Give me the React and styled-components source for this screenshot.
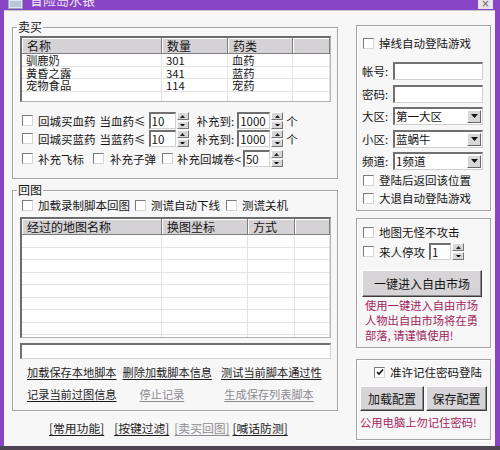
import React from 'react'
import styled, { createGlobalStyle } from 'styled-components'

const GlobalStyle = createGlobalStyle`
  html, body { margin: 0; padding: 0; background: #fff; }
  body {
    font-family: "Noto Sans CJK SC", "Noto Sans", sans-serif;
    font-size: 11.5px;
    color: #141414;
  }
  * { box-sizing: border-box; }
`

const Window = styled.div`
  width: 500px;
  height: 450px;
  background: #8744c4;
  padding: 0 5px 0 4px;
  border-bottom: 4px solid #4c4654;
  display: flex;
  flex-direction: column;
`
const TitleBar = styled.div`
  height: 10px;
  flex: none;
  display: flex;
  align-items: flex-start;
  overflow: hidden;
  padding-left: 4px;
`
const TitleIcon = styled.svg`
  flex: none;
  margin-top: -3px;
`
const TitleText = styled.span`
  margin: -8px 0 0 7px;
  color: #f1e8f8;
  font-size: 13px;
  line-height: 16px;
`
const CloseBtn = styled.div`
  margin-left: auto;
  margin-right: 2px;
  width: 15px;
  height: 9px;
  background: #e6e4e8;
  color: #666;
  font-size: 10px;
  line-height: 7px;
  text-align: center;
  font-family: "DejaVu Sans", sans-serif;
`
const Client = styled.div`
  flex: 1;
  background: #f8f7f8;
  border-top: 1px solid #c9c6cc;
  display: flex;
  gap: 18px;
  padding: 0 5px 0 8px;
`
const Column = styled.div`
  width: ${p => p.$w}px;
  flex: none;
  display: flex;
  flex-direction: column;
  padding-top: ${p => p.$pt}px;
`
const Group = styled.fieldset`
  margin: ${p => p.$mt || 0}px 0 0 0;
  height: ${p => p.$h}px;
  min-width: 0;
  padding: ${p => p.$pad || '0 6px 0 7px'};
  border: 1px solid #a4a2a7;
  box-shadow: 1px 1px 0 #fff, inset 1px 1px 0 #fff;
  display: flex;
  flex-direction: column;
`
const Legend = styled.legend`
  font-size: 12px;
  line-height: 14px;
  padding: 0 1px;
  margin-left: -3px;
`
const ListView = styled.div`
  margin-top: ${p => p.$mt}px;
  height: ${p => p.$h}px;
  flex: none;
  overflow: hidden;
  background: #fff;
  border-style: solid;
  border-width: 2px 1px 1px 2px;
  border-color: #6c6c6c #b4b4b4 #b4b4b4 #6c6c6c;
  display: grid;
  grid-template-columns: ${p => p.$cols};
  grid-template-rows: 16px;
  grid-auto-rows: 12.5px;
`
const HeadCell = styled.div`
  background: #d5d2d5;
  border-right: 1px solid #7e7e7e;
  border-bottom: 1px solid #7e7e7e;
  box-shadow: inset 1px 1px 0 #fff;
  padding-left: 5px;
  font-size: 12px;
  line-height: 15px;
  white-space: nowrap;
  overflow: hidden;
`
const Cell = styled.div`
  border-right: 1px solid #e3e3e3;
  border-bottom: 1px solid #e3e3e3;
  padding-left: 4px;
  font-size: 11.3px;
  line-height: 12px;
  white-space: nowrap;
`
const Row = styled.div`
  display: flex;
  align-items: center;
  height: ${p => p.$h || 17}px;
  margin-top: ${p => p.$mt || 0}px;
  flex: none;
  white-space: nowrap;
`
const Label = styled.span`
  margin-left: ${p => p.$ml || 0}px;
  width: ${p => (p.$w ? `${p.$w}px` : 'auto')};
  flex: none;
  line-height: 14px;
`
const CheckBox = styled.span`
  width: 11px;
  height: 11px;
  flex: none;
  margin-left: ${p => p.$ml || 0}px;
  background: #fff;
  border-style: solid;
  border-width: 1px;
  border-color: #7a7a7a #d6d6d6 #d6d6d6 #7a7a7a;
  display: flex;
  align-items: center;
  justify-content: center;
`
const SpinWrap = styled.div`
  display: flex;
  gap: 1px;
  margin-left: ${p => p.$ml || 0}px;
  flex: none;
  height: 17px;
`
const SunkenBox = styled.div`
  width: ${p => (p.$w ? `${p.$w}px` : 'auto')};
  flex: ${p => (p.$w ? 'none' : '1')};
  height: 100%;
  background: #fff;
  border-style: solid;
  border-width: 2px 1px 1px 2px;
  border-color: #707070 #d0d0d0 #d0d0d0 #707070;
  padding-left: 1px;
  font-size: 11.5px;
  line-height: 13px;
  display: flex;
  align-items: center;
  overflow: hidden;
`
const SpinButtons = styled.div`
  width: 12px;
  display: flex;
  flex-direction: column;
  gap: 1px;
`
const SpinHalf = styled.div`
  flex: 1;
  background: #d8d6d8;
  border: 1px solid;
  border-color: #fff #777 #777 #fff;
  display: flex;
  align-items: center;
  justify-content: center;
`
const DropButton = styled.div`
  width: 14px;
  margin: 1px 1px 1px auto;
  align-self: stretch;
  background: #d8d6d8;
  border: 1px solid;
  border-color: #fff #666 #666 #fff;
  display: flex;
  align-items: center;
  justify-content: center;
`
const Button = styled.div`
  width: ${p => p.$w}px;
  height: ${p => p.$h}px;
  margin-left: ${p => p.$ml || 0}px;
  margin-top: ${p => p.$mt || 0}px;
  flex: none;
  background: #d6d4d6;
  border: 1px solid;
  border-color: #fff #3c3c3c #3c3c3c #fff;
  box-shadow: inset -1px -1px 0 #8a8a8a;
  display: flex;
  align-items: center;
  justify-content: center;
  font-size: 12px;
`
const Note = styled.div`
  margin: ${p => p.$mt || 0}px 0 0 ${p => p.$ml || 0}px;
  color: #a2245a;
  font-size: 11.3px;
  line-height: 15px;
`
const FieldRow = styled.div`
  display: flex;
  align-items: center;
  height: 18px;
  margin-top: ${p => p.$mt}px;
  flex: none;
`
const LinkText = styled.span`
  margin-left: ${p => p.$ml || 0}px;
  color: ${p => (p.$dim ? '#8c8a90' : '#1c1c1c')};
  text-decoration: underline;
  text-underline-offset: 2px;
  font-size: ${p => p.$size || 11.2}px;
  line-height: 14px;
  white-space: nowrap;
`
const ButtonRow = styled.div`
  display: flex;
  gap: 2px;
  margin-top: ${p => p.$mt}px;
`

const UpArrow = () => (
  <svg width="5" height="3" viewBox="0 0 5 3"><path d="M2.5 0 L5 3 L0 3 Z" fill="#222" /></svg>
)
const DownArrow = ({ size = 5 }) => (
  <svg width={size} height={size / 1.7} viewBox="0 0 5 3"><path d="M0 0 L5 0 L2.5 3 Z" fill="#111" /></svg>
)

function Check({ ml, checked }) {
  return (
    <CheckBox $ml={ml}>
      {checked && (
        <svg width="8" height="8" viewBox="0 0 8 8">
          <path d="M1 4 L3 6 L7 1.5" stroke="#111" strokeWidth="1.6" fill="none" />
        </svg>
      )}
    </CheckBox>
  )
}

function Spin({ value, w, ml }) {
  return (
    <SpinWrap $ml={ml}>
      <SunkenBox $w={w}>{value}</SunkenBox>
      <SpinButtons>
        <SpinHalf><UpArrow /></SpinHalf>
        <SpinHalf><DownArrow /></SpinHalf>
      </SpinButtons>
    </SpinWrap>
  )
}

function Select({ value }) {
  return (
    <SunkenBox>
      <span>{value}</span>
      <DropButton><DownArrow size={7} /></DropButton>
    </SunkenBox>
  )
}

const buyItems = [
  ['驯鹿奶', '301', '血药'],
  ['黄昏之露', '341', '蓝药'],
  ['宠物食品', '114', '宠药'],
  ['', '', ''],
]

export default function App() {
  return (
    <>
      <GlobalStyle />
      <Window>
        <TitleBar>
          <TitleIcon width="15" height="12" viewBox="0 0 15 12">
            <rect x="0.5" y="0.5" width="14" height="11" fill="#dfe6f0" stroke="#9aa6b8" />
            <rect x="2" y="4" width="11" height="6" fill="#b8c6da" />
          </TitleIcon>
          <TitleText>冒险岛水银</TitleText>
          <CloseBtn>×</CloseBtn>
        </TitleBar>
        <Client>
          <Column $w={326} $pt={9}>
            <Group $h={159}>
              <Legend>卖买</Legend>
              <ListView $mt={2} $h={66} $cols="140px 66px 65px 1fr">
                <HeadCell>名称</HeadCell>
                <HeadCell>数量</HeadCell>
                <HeadCell>药类</HeadCell>
                <HeadCell />
                {buyItems.map((it, i) => (
                  <React.Fragment key={i}>
                    <Cell>{it[0]}</Cell>
                    <Cell>{it[1]}</Cell>
                    <Cell>{it[2]}</Cell>
                    <Cell />
                  </React.Fragment>
                ))}
              </ListView>
              <Row $mt={10}>
                <Check ml={2} />
                <Label $ml={5}>回城买血药</Label>
                <Label $ml={4}>当血药≤</Label>
                <Spin value="10" w={27} ml={3} />
                <Label $ml={8}>补充到:</Label>
                <Spin value="1000" w={33} ml={3} />
                <Label $ml={3}>个</Label>
              </Row>
              <Row $mt={1}>
                <Check ml={2} />
                <Label $ml={5}>回城买蓝药</Label>
                <Label $ml={4}>当蓝药≤</Label>
                <Spin value="10" w={27} ml={3} />
                <Label $ml={8}>补充到:</Label>
                <Spin value="1000" w={33} ml={3} />
                <Label $ml={3}>个</Label>
              </Row>
              <Row $mt={3}>
                <Check ml={2} />
                <Label $ml={5}>补充飞标</Label>
                <Check ml={9} />
                <Label $ml={6}>补充子弹</Label>
                <Check ml={6} />
                <Label $ml={4}>补充回城卷&lt;</Label>
                <Spin value="50" w={27} ml={2} />
              </Row>
            </Group>

            <Group $h={228} $mt={4}>
              <Legend>回图</Legend>
              <Row $h={14} $mt={1}>
                <Check ml={2} />
                <Label $ml={5}>加载录制脚本回图</Label>
                <Check ml={5} />
                <Label $ml={5}>测谎自动下线</Label>
                <Check ml={6} />
                <Label $ml={5}>测谎关机</Label>
              </Row>
              <ListView $mt={5} $h={121} $cols="140px 86px 47px 1fr">
                <HeadCell>经过的地图名称</HeadCell>
                <HeadCell>换图坐标</HeadCell>
                <HeadCell>方式</HeadCell>
                <HeadCell />
                {Array.from({ length: 9 * 4 }).map((_, i) => <Cell key={i} />)}
              </ListView>
              <Row $h={16} $mt={5}>
                <SunkenBox />
              </Row>
              <Row $h={14} $mt={6}>
                <LinkText $ml={7}>加载保存本地脚本</LinkText>
                <LinkText $ml={6}>删除加载脚本信息</LinkText>
                <LinkText $ml={9}>测试当前脚本通过性</LinkText>
              </Row>
              <Row $h={14} $mt={8}>
                <LinkText $ml={7}>记录当前过图信息</LinkText>
                <LinkText $ml={23} $dim>停止记录</LinkText>
                <LinkText $ml={40} $dim>生成保存列表脚本</LinkText>
              </Row>
            </Group>

            <Row $h={14} $mt={10}>
              <LinkText $ml={37} $size={11.8}>[常用功能]</LinkText>
              <LinkText $ml={10} $size={11.8}>[按键过滤]</LinkText>
              <LinkText $ml={5} $size={11.8} $dim>[卖买回图]</LinkText>
              <LinkText $ml={3} $size={11.8}>[喊话防测]</LinkText>
            </Row>
          </Column>

          <Column $w={135} $pt={14}>
            <Group $h={186} $pad="10px 7px 0 5px">
              <Row $h={14}>
                <Check ml={1} />
                <Label $ml={5}>掉线自动登陆游戏</Label>
              </Row>
              <FieldRow $mt={12}>
                <Label $w={31}>帐号:</Label>
                <SunkenBox />
              </FieldRow>
              <FieldRow $mt={4.5}>
                <Label $w={31}>密码:</Label>
                <SunkenBox />
              </FieldRow>
              <FieldRow $mt={4.5}>
                <Label $w={31}>大区:</Label>
                <Select value="第一大区" />
              </FieldRow>
              <FieldRow $mt={4.5}>
                <Label $w={31}>小区:</Label>
                <Select value="蓝蜗牛" />
              </FieldRow>
              <FieldRow $mt={4.5}>
                <Label $w={31}>频道:</Label>
                <Select value="1频道" />
              </FieldRow>
              <Row $h={14} $mt={3}>
                <Check ml={1} />
                <Label $ml={5}>登陆后返回该位置</Label>
              </Row>
              <Row $h={14} $mt={4}>
                <Check ml={1} />
                <Label $ml={5}>大退自动登陆游戏</Label>
              </Row>
            </Group>

            <Group $h={130} $mt={7} $pad="6px 7px 0 5px">
              <Row $h={14}>
                <Check ml={1} />
                <Label $ml={5}>地图无怪不攻击</Label>
              </Row>
              <Row $mt={4}>
                <Check ml={1} />
                <Label $ml={5}>来人停攻</Label>
                <Spin value="1" w={22} ml={4} />
              </Row>
              <Button $w={120} $h={27} $mt={10}>一键进入自由市场</Button>
              <Note $mt={1} $ml={3}>
                使用一键进入自由市场<br />
                人物出自由市场将在勇<br />
                部落, 请谨慎使用!
              </Note>
            </Group>

            <Group $h={81} $mt={11} $pad="5px 2px 0 3px">
              <Row $h={14}>
                <Check ml={14} checked />
                <Label $ml={5}>准许记住密码登陆</Label>
              </Row>
              <ButtonRow $mt={7}>
                <Button $w={64} $h={25}>加载配置</Button>
                <Button $w={61} $h={25}>保存配置</Button>
              </ButtonRow>
              <Note $mt={4}>公用电脑上勿记住密码!</Note>
            </Group>
          </Column>
        </Client>
      </Window>
    </>
  )
}
